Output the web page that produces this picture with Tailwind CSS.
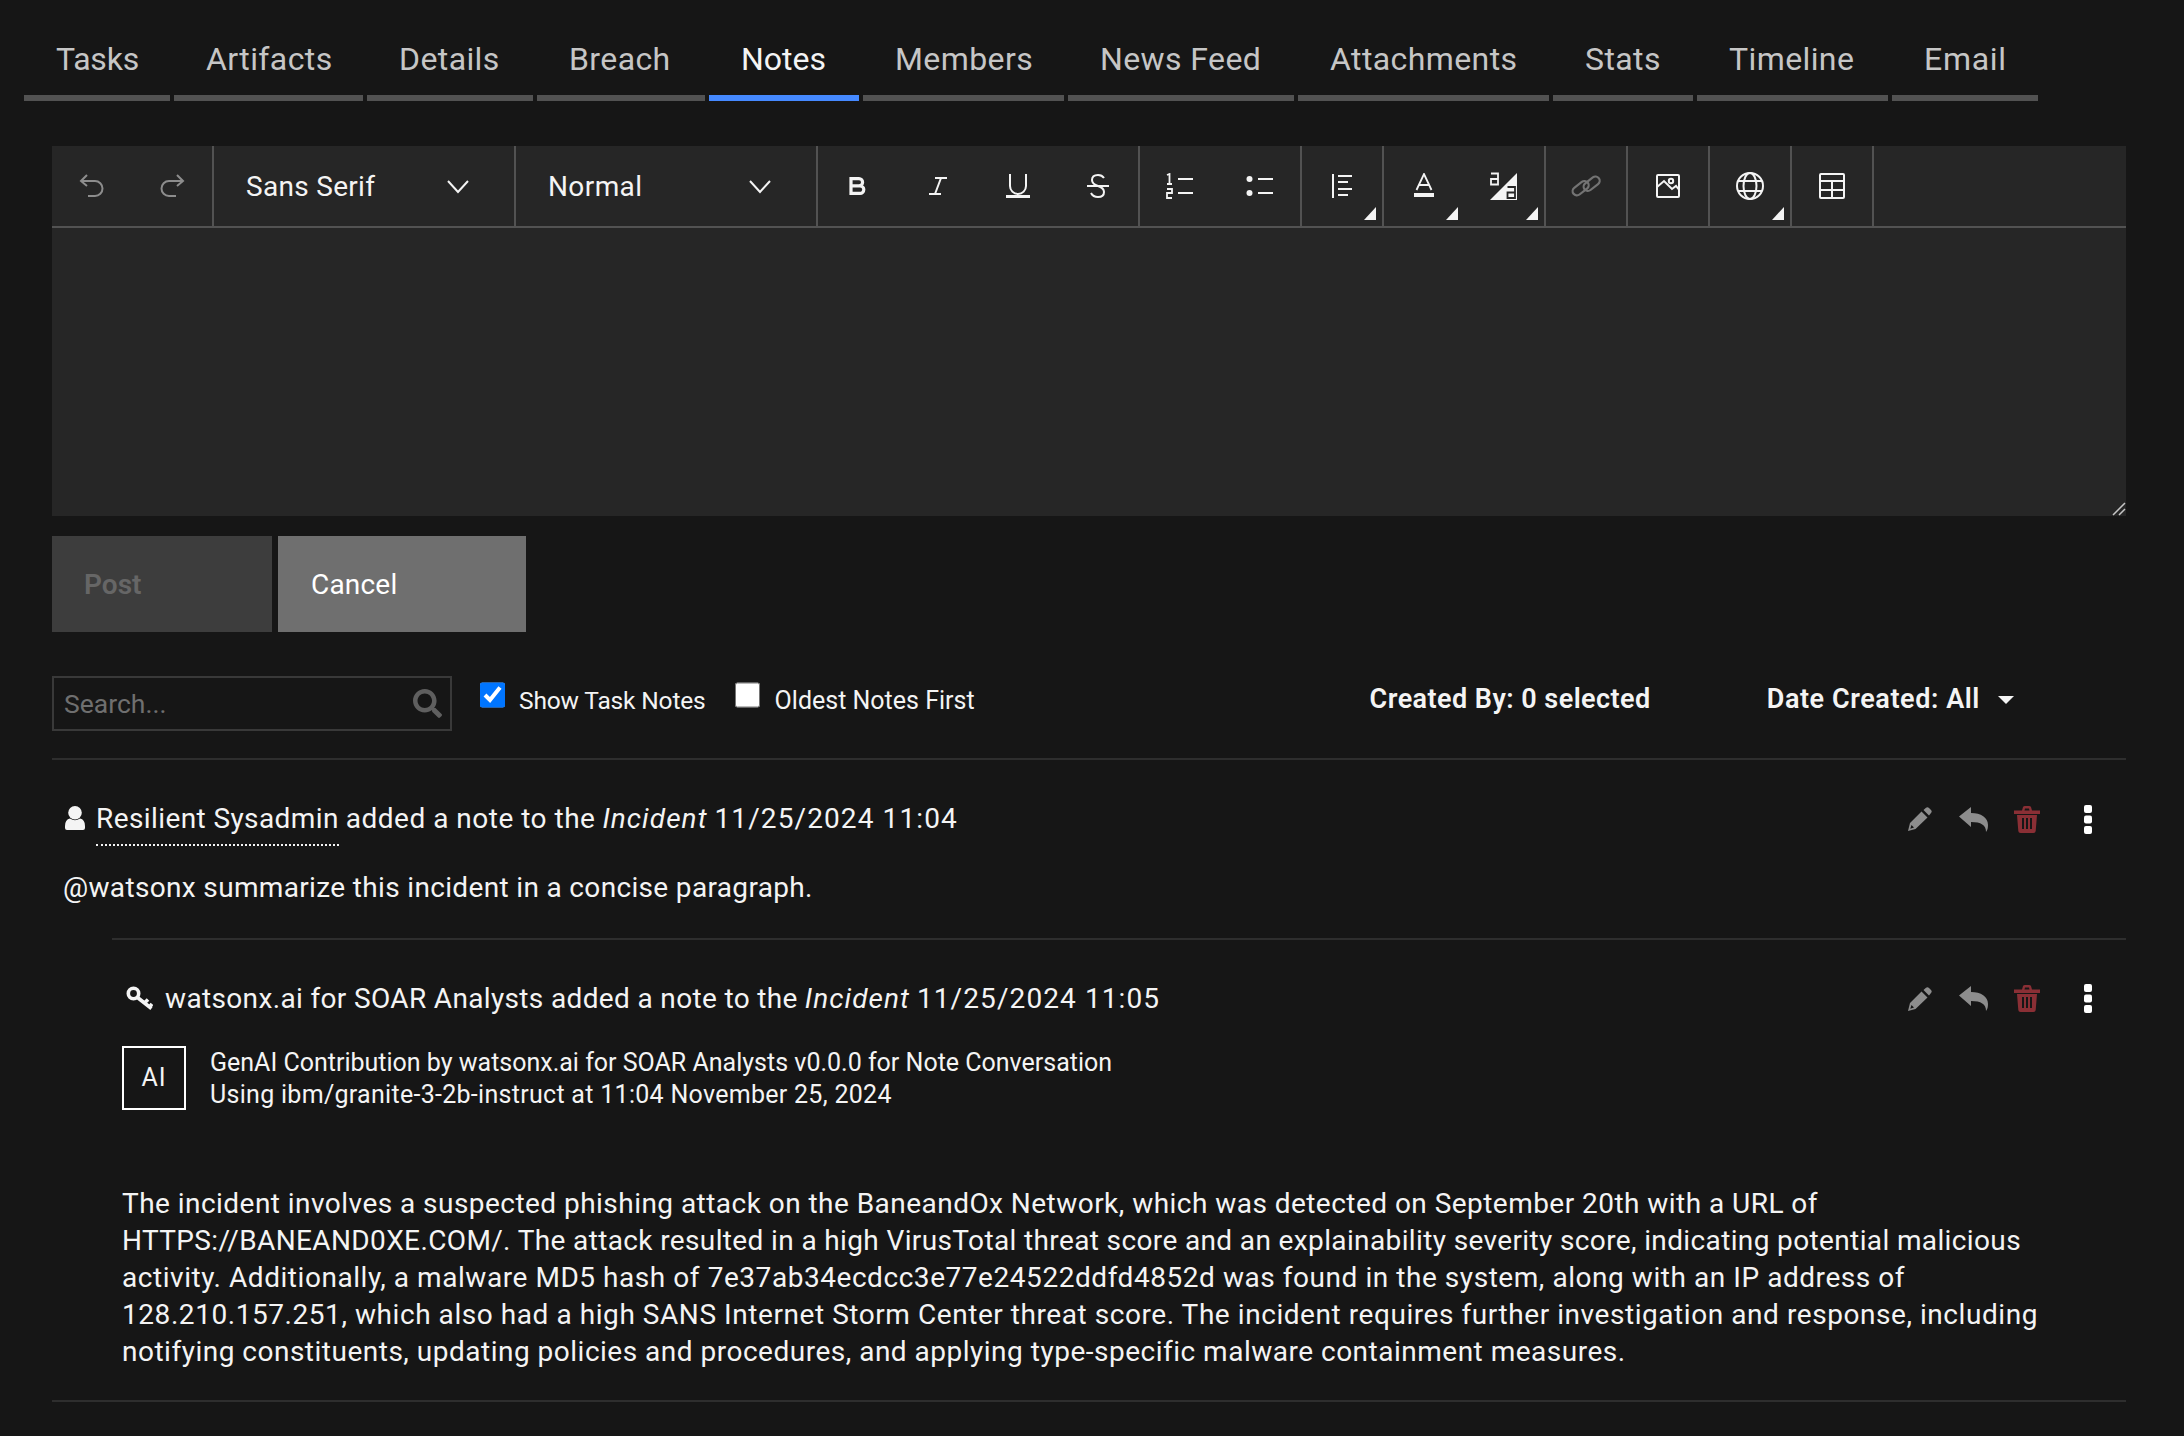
<!DOCTYPE html>
<html lang="en">
<head>
    <meta charset="UTF-8">
    <title>Notes</title>
    <script src="https://cdn.jsdelivr.net/npm/@tailwindcss/browser@4"></script>
</head>
<body class="bg-[#161616] text-[#f4f4f4] [font-family:Roboto,sans-serif]">
    <div class="w-[2184px] h-[1436px] overflow-hidden">
        <!-- Tabs -->
        <nav class="flex pl-[24px] gap-[4px] text-[32px] leading-[40px] tracking-[0.4px] text-[#c6c6c6]">
            <div class="w-[146px] pt-[39px] pb-[16px] pl-[32px] tracking-[-0.2px] border-b-[6px] border-[#525252]">Tasks</div>
            <div class="w-[189px] pt-[39px] pb-[16px] pl-[32px] border-b-[6px] border-[#525252]">Artifacts</div>
            <div class="w-[166px] pt-[39px] pb-[16px] pl-[32px] border-b-[6px] border-[#525252]">Details</div>
            <div class="w-[168px] pt-[39px] pb-[16px] pl-[32px] border-b-[6px] border-[#525252]">Breach</div>
            <div class="w-[150px] pt-[39px] pb-[16px] pl-[32px] tracking-normal border-b-[6px] border-[#4589ff] text-[#f4f4f4]">Notes</div>
            <div class="w-[201px] pt-[39px] pb-[16px] pl-[32px] border-b-[6px] border-[#525252]">Members</div>
            <div class="w-[226px] pt-[39px] pb-[16px] pl-[32px] border-b-[6px] border-[#525252]">News Feed</div>
            <div class="w-[251px] pt-[39px] pb-[16px] pl-[32px] border-b-[6px] border-[#525252]">Attachments</div>
            <div class="w-[140px] pt-[39px] pb-[16px] pl-[32px] border-b-[6px] border-[#525252]">Stats</div>
            <div class="w-[191px] pt-[39px] pb-[16px] pl-[32px] border-b-[6px] border-[#525252]">Timeline</div>
            <div class="w-[146px] pt-[39px] pb-[16px] pl-[32px] tracking-[0.7px] border-b-[6px] border-[#525252]">Email</div>
        </nav>

        <main class="ml-[52px] w-[2074px]">
            <!-- Editor -->
            <div class="mt-[45px] bg-[#262626]">
                <div class="flex h-[82px] border-b-2 border-[#525252]">
                    <div class="w-[162px] flex border-r-2 border-[#525252] text-[#8d8d8d]">
                        <div class="w-[80px] flex items-center justify-center">
                            <svg class="w-[28px] h-[28px]" viewBox="0 0 28 28" fill="none" stroke="currentColor" stroke-width="2"><path d="M9 3 L3 9 L9 14"/><path d="M4 9 H17 A7.5 7.5 0 0 1 17 24 H10"/></svg>
                        </div>
                        <div class="w-[80px] flex items-center justify-center">
                            <svg class="w-[28px] h-[28px]" viewBox="0 0 28 28" fill="none" stroke="currentColor" stroke-width="2"><path d="M19 3 L25 9 L19 14"/><path d="M24 9 H11 A7.5 7.5 0 0 0 11 24 H18"/></svg>
                        </div>
                    </div>
                    <div class="w-[302px] flex items-center justify-between pt-[2px] pl-[32px] pr-[45px] border-r-2 border-[#525252] text-[28px] tracking-[0.3px]">
                        <span>Sans Serif</span>
                        <svg class="w-[22px] h-[14px]" viewBox="0 0 22 14" fill="none" stroke="currentColor" stroke-width="2"><path d="M1 1 L11 12 L21 1"/></svg>
                    </div>
                    <div class="w-[302px] flex items-center justify-between pt-[2px] pl-[32px] pr-[45px] border-r-2 border-[#525252] text-[28px] tracking-[0.4px]">
                        <span>Normal</span>
                        <svg class="w-[22px] h-[14px]" viewBox="0 0 22 14" fill="none" stroke="currentColor" stroke-width="2"><path d="M1 1 L11 12 L21 1"/></svg>
                    </div>
                    <div class="w-[322px] flex border-r-2 border-[#525252]">
                        <div class="w-[80px] flex items-center justify-center">
                            <svg class="w-[18px] h-[18px]" viewBox="0 0 18 18" fill="none" stroke="currentColor" stroke-width="3.2"><path d="M2 1.6 H10 A3.6 3.6 0 0 1 10 8.8 H2 Z M2 8.8 H11 A3.8 3.8 0 0 1 11 16.4 H2 Z"/></svg>
                        </div>
                        <div class="w-[80px] flex items-center justify-center">
                            <svg class="w-[18px] h-[18px]" viewBox="0 0 18 18" fill="none" stroke="currentColor" stroke-width="2"><path d="M6 1 H18 M0 17 H12 M12 1 L6 17"/></svg>
                        </div>
                        <div class="w-[80px] flex items-center justify-center">
                            <svg class="w-[24px] h-[24px]" viewBox="0 0 24 24" fill="none" stroke="currentColor" stroke-width="2"><path d="M4 0 V12 A8 8 0 0 0 20 12 V0"/><path d="M0 22.5 H24" stroke-width="3"/></svg>
                        </div>
                        <div class="w-[80px] flex items-center justify-center">
                            <svg class="w-[24px] h-[26px]" viewBox="0 0 24 26" fill="none" stroke="currentColor" stroke-width="2"><path d="M1 13 H23"/><path d="M18 5 Q16 2 12 2 Q6 2 6 7 Q6 11 12 13 Q18 15 18 19 Q18 24 12 24 Q7 24 5 20"/></svg>
                        </div>
                    </div>
                    <div class="w-[162px] flex border-r-2 border-[#525252]">
                        <div class="w-[80px] flex items-center justify-center">
                            <svg class="w-[28px] h-[26px]" viewBox="0 0 28 26" fill="none" stroke="currentColor" stroke-width="2"><path d="M1 2 L3.5 1 V11 M1 11 H6 M1 16 H6 V20 H1 V25 H6" stroke-width="1.8"/><path d="M12 6 H27 M12 20 H27"/></svg>
                        </div>
                        <div class="w-[80px] flex items-center justify-center">
                            <svg class="w-[28px] h-[26px]" viewBox="0 0 28 26" fill="none" stroke="currentColor" stroke-width="2"><circle cx="3.5" cy="6" r="3" fill="currentColor" stroke="none"/><circle cx="3.5" cy="20" r="3" fill="currentColor" stroke="none"/><path d="M12 6 H27 M12 20 H27"/></svg>
                        </div>
                    </div>
                    <div class="w-[82px] relative flex items-center justify-center border-r-2 border-[#525252]">
                        <svg class="w-[20px] h-[26px]" viewBox="0 0 20 26" fill="none" stroke="currentColor" stroke-width="2"><path d="M1 1 V25"/><path d="M6 3 H20 M6 9 H16 M6 16 H20 M6 22 H16"/></svg>
                        <svg class="absolute right-[6px] bottom-[6px] w-[12px] h-[13px]" viewBox="0 0 12 13" fill="#f4f4f4"><path d="M12 0 V13 H0 Z"/></svg>
                    </div>
                    <div class="w-[162px] flex border-r-2 border-[#525252]">
                        <div class="w-[80px] relative flex items-center justify-center">
                            <svg class="w-[20px] h-[26px]" viewBox="0 0 20 26" fill="none" stroke="currentColor" stroke-width="1.8"><path d="M2.5 17 L10 1 L17.5 17 M5 12 H15"/><path d="M0 22 H20" stroke-width="4"/></svg>
                            <svg class="absolute right-[6px] bottom-[6px] w-[12px] h-[13px]" viewBox="0 0 12 13" fill="#f4f4f4"><path d="M12 0 V13 H0 Z"/></svg>
                        </div>
                        <div class="w-[80px] relative flex items-center justify-center">
                            <svg class="w-[30px] h-[28px]" viewBox="0 0 30 28" fill="none" stroke="currentColor" stroke-width="1.8"><path d="M1 28 L28 1 V28 Z" fill="currentColor" stroke="none"/><path d="M2 1.5 H9 V12.5 H2 V7 H9"/><path d="M18.5 15 H26 V26 H18.5 V20.5 H26" stroke="#262626"/></svg>
                            <svg class="absolute right-[6px] bottom-[6px] w-[12px] h-[13px]" viewBox="0 0 12 13" fill="#f4f4f4"><path d="M12 0 V13 H0 Z"/></svg>
                        </div>
                    </div>
                    <div class="w-[82px] flex items-center justify-center border-r-2 border-[#525252] text-[#737373]">
                        <svg class="w-[30px] h-[24px]" viewBox="0 0 30 24" fill="none" stroke="currentColor" stroke-width="2.2"><rect x="0.5" y="10" width="18" height="8.5" rx="4.2" transform="rotate(-38 9.5 14)"/><rect x="11.5" y="5.5" width="18" height="8.5" rx="4.2" transform="rotate(-38 20.5 9.5)"/></svg>
                    </div>
                    <div class="w-[82px] flex items-center justify-center border-r-2 border-[#525252]">
                        <svg class="w-[24px] h-[24px]" viewBox="0 0 24 24" fill="none" stroke="currentColor" stroke-width="2"><rect x="1" y="1" width="22" height="22" rx="1"/><circle cx="15" cy="7" r="2.2"/><path d="M1 13 L8 7 L16 15 L20 12 L24 17"/></svg>
                    </div>
                    <div class="w-[82px] relative flex items-center justify-center border-r-2 border-[#525252]">
                        <svg class="w-[28px] h-[28px]" viewBox="0 0 28 28" fill="none" stroke="currentColor" stroke-width="2"><circle cx="14" cy="14" r="13"/><ellipse cx="14" cy="14" rx="6.5" ry="13"/><path d="M2 9 H26 M2 19 H26"/></svg>
                        <svg class="absolute right-[6px] bottom-[6px] w-[12px] h-[13px]" viewBox="0 0 12 13" fill="#f4f4f4"><path d="M12 0 V13 H0 Z"/></svg>
                    </div>
                    <div class="w-[82px] flex items-center justify-center border-r-2 border-[#525252]">
                        <svg class="w-[26px] h-[26px]" viewBox="0 0 26 26" fill="none" stroke="currentColor" stroke-width="2"><rect x="1" y="1" width="24" height="24" rx="1"/><path d="M1 8 H25 M1 17 H25 M13 8 V25"/></svg>
                    </div>
                </div>
                <div class="relative h-[288px]">
                    <svg class="absolute right-0 bottom-0 w-[14px] h-[14px]" viewBox="0 0 14 14" fill="none" stroke="#c6c6c6" stroke-width="1.5"><path d="M1 13 L13 1 M7 13 L13 7"/></svg>
                </div>
            </div>

            <!-- Buttons -->
            <div class="flex gap-[6px] mt-[20px] text-[28px]">
                <button class="w-[220px] h-[96px] pt-[1px] pl-[32px] text-left bg-[#3d3d3d] text-[#666666] font-semibold">Post</button>
                <button class="w-[248px] h-[96px] pt-[1px] pl-[33px] text-left bg-[#6f6f6f] text-white tracking-[0.2px]">Cancel</button>
            </div>

            <!-- Filters -->
            <div class="flex mt-[44px] h-[55px]">
                <div class="w-[400px] h-[55px] flex items-center justify-between pl-[10px] pr-[8px] border-2 border-[#393939]">
                    <span class="text-[26.5px] text-[#6f6f6f]">Search...</span>
                    <svg class="w-[29px] h-[29px] text-[#5f5f5f]" viewBox="0 0 512 512" fill="currentColor"><path d="M505 442.7L405.3 343c-4.5-4.5-10.6-7-17-7H372c27.6-35.3 44-79.7 44-128C416 93.1 322.9 0 208 0S0 93.1 0 208s93.1 208 208 208c48.3 0 92.7-16.4 128-44v16.3c0 6.4 2.5 12.5 7 17l99.7 99.7c9.4 9.4 24.6 9.4 33.9 0l28.3-28.3c9.4-9.4 9.4-24.6.1-34zM208 336c-70.7 0-128-57.2-128-128 0-70.7 57.2-128 128-128 70.7 0 128 57.2 128 128 0 70.7-57.2 128-128 128z"/></svg>
                </div>
                <input type="checkbox" checked class="w-[25px] h-[26px] ml-[28px] mt-[6px] m-0">
                <span class="ml-[14px] mt-[8px] text-[24.5px] leading-[34px] tracking-[-0.15px]">Show Task Notes</span>
                <input type="checkbox" class="w-[25px] h-[26px] ml-[29px] mt-[6px] m-0">
                <span class="ml-[15px] mt-[8px] text-[25px] leading-[34px]">Oldest Notes First</span>
                <span class="ml-[395px] mt-[3px] text-[27px] leading-[40px] font-semibold tracking-[0.45px]">Created By: 0 selected</span>
                <span class="ml-[116px] mt-[3px] text-[27px] leading-[40px] font-semibold tracking-[0.57px]">Date Created: All</span>
                <svg class="ml-[18px] mt-[20px] w-[16px] h-[8px]" viewBox="0 0 16 8" fill="currentColor"><path d="M0 0 H16 L8 8 Z"/></svg>
            </div>
            <div class="mt-[27px] h-[2px] bg-[#2e2e2e]"></div>

            <!-- Note from sysadmin -->
            <div class="mt-[39px] h-[40px] flex items-center justify-between text-[28px] leading-[40px]">
                <div class="flex -mt-[1px] h-[40px] pl-[13px]">
                    <svg class="w-[20px] h-[24px] mt-[7px] mr-[11px]" viewBox="0 0 20 24" fill="currentColor"><circle cx="10" cy="6.8" r="6.8"/><path d="M0 20 Q0 13.5 5 12.5 Q10 16 15 12.5 Q20 13.5 20 20 V22 Q20 24 18 24 H2 Q0 24 0 22 Z"/></svg>
                    <div class="whitespace-nowrap"><span class="inline-block h-[47px] align-top border-b-2 border-dotted border-[#f4f4f4] tracking-[0.4px]">Resilient Sysadmin</span> <span class="tracking-[0.5px]">added a note to the</span> <em class="tracking-[1.05px]">Incident</em> <span class="tracking-[1.1px]">11/25/2024 11:04</span></div>
                </div>
                <div class="flex items-center pr-[34px]">
                    <svg class="w-[24px] h-[24px] text-[#8d8d8d]" viewBox="0 0 24 24" fill="currentColor"><path d="M15.5 3 L18 0.8 Q19.7 -0.4 21 1 L23 3 Q24.4 4.4 23 6 L21 8.5 Z"/><path fill-rule="evenodd" d="M13.5 4.5 L19.5 10.5 L7.5 22 L0 24 L2 16 Z M3.5 18 L2.3 21.7 L6 20.5 Z"/></svg>
                    <svg class="w-[29px] h-[25px] ml-[27px] text-[#8d8d8d]" viewBox="0 0 29 25" fill="currentColor"><path d="M0 9.5 L12 0 V6 C22 6 29 10.5 29 18 C29 21 28.5 23 27 25 C27 18 22 15 12 15 V20 Z"/></svg>
                    <svg class="w-[26px] h-[27px] ml-[26px] text-[#8a2f35]" viewBox="0 0 26 27" fill="currentColor"><path d="M0 4.5 H26 V8 H0 Z M8 4.5 L9 1 Q9.5 0 11 0 H15 Q16.5 0 17 1 L18 4.5 H15.5 L15 2.5 H11 L10.5 4.5 Z"/><path fill-rule="evenodd" d="M3 9 H23 L21.7 25 Q21.5 27 19.5 27 H6.5 Q4.5 27 4.3 25 Z M8 12 V23 H10 V12 Z M12 12 V23 H14 V12 Z M16 12 V23 H18 V12 Z"/></svg>
                    <svg class="w-[8px] h-[29px] ml-[44px] text-white" viewBox="0 0 8 29" fill="currentColor"><rect x="0" y="0" width="8" height="8" rx="2"/><rect x="0" y="10.5" width="8" height="8" rx="2"/><rect x="0" y="21" width="8" height="8" rx="2"/></svg>
                </div>
            </div>
            <p class="mt-[29px] pl-[11px] text-[28px] leading-[40px] tracking-[0.34px]">@watsonx summarize this incident in a concise paragraph.</p>

            <!-- Reply from watsonx -->
            <div class="ml-[60px] mt-[30px] h-[2px] bg-[#2e2e2e]"></div>
            <div class="mt-[39px] h-[40px] flex items-center justify-between text-[28px] leading-[40px]">
                <div class="flex h-[40px] pl-[74px]">
                    <svg class="w-[27px] h-[24px] mt-[7px] mr-[12px]" viewBox="0 0 27 24" fill="none" stroke="currentColor" stroke-width="3.6"><circle cx="7.5" cy="7.5" r="5.2"/><path d="M11.5 11.5 L25.5 22.5 M18.5 17 L22 13.5 M23.5 21 L26 18"/></svg>
                    <div class="whitespace-nowrap"><span class="tracking-[0.35px]">watsonx.ai for SOAR Analysts added a note to the</span> <em class="tracking-[1.05px]">Incident</em> <span class="tracking-[1.1px]">11/25/2024 11:05</span></div>
                </div>
                <div class="flex items-center -mt-[1px] pr-[34px]">
                    <svg class="w-[24px] h-[24px] text-[#8d8d8d]" viewBox="0 0 24 24" fill="currentColor"><path d="M15.5 3 L18 0.8 Q19.7 -0.4 21 1 L23 3 Q24.4 4.4 23 6 L21 8.5 Z"/><path fill-rule="evenodd" d="M13.5 4.5 L19.5 10.5 L7.5 22 L0 24 L2 16 Z M3.5 18 L2.3 21.7 L6 20.5 Z"/></svg>
                    <svg class="w-[29px] h-[25px] ml-[27px] text-[#8d8d8d]" viewBox="0 0 29 25" fill="currentColor"><path d="M0 9.5 L12 0 V6 C22 6 29 10.5 29 18 C29 21 28.5 23 27 25 C27 18 22 15 12 15 V20 Z"/></svg>
                    <svg class="w-[26px] h-[27px] ml-[26px] text-[#8a2f35]" viewBox="0 0 26 27" fill="currentColor"><path d="M0 4.5 H26 V8 H0 Z M8 4.5 L9 1 Q9.5 0 11 0 H15 Q16.5 0 17 1 L18 4.5 H15.5 L15 2.5 H11 L10.5 4.5 Z"/><path fill-rule="evenodd" d="M3 9 H23 L21.7 25 Q21.5 27 19.5 27 H6.5 Q4.5 27 4.3 25 Z M8 12 V23 H10 V12 Z M12 12 V23 H14 V12 Z M16 12 V23 H18 V12 Z"/></svg>
                    <svg class="w-[8px] h-[29px] ml-[44px] text-white" viewBox="0 0 8 29" fill="currentColor"><rect x="0" y="0" width="8" height="8" rx="2"/><rect x="0" y="10.5" width="8" height="8" rx="2"/><rect x="0" y="21" width="8" height="8" rx="2"/></svg>
                </div>
            </div>
            <div class="flex mt-[27px] ml-[70px]">
                <div class="w-[64px] h-[64px] flex items-center justify-center border-2 border-white text-[25px] tracking-[1px]">AI</div>
                <div class="ml-[24px] pt-[1px] text-[25px] leading-[32px]">
                    <div>GenAI Contribution by watsonx.ai for SOAR Analysts v0.0.0 for Note Conversation</div>
                    <div class="tracking-[0.29px]">Using ibm/granite-3-2b-instruct at 11:04 November 25, 2024</div>
                </div>
            </div>
            <div class="mt-[74px] ml-[70px] text-[28px] leading-[37px] whitespace-nowrap">
                <div class="tracking-[0.46px]">The incident involves a suspected phishing attack on the BaneandOx Network, which was detected on September 20th with a URL of</div>
                <div class="tracking-[0.37px]">HTTPS://BANEAND0XE.COM/. The attack resulted in a high VirusTotal threat score and an explainability severity score, indicating potential malicious</div>
                <div class="tracking-[0.55px]">activity. Additionally, a malware MD5 hash of 7e37ab34ecdcc3e77e24522ddfd4852d was found in the system, along with an IP address of</div>
                <div class="tracking-[0.56px]">128.210.157.251, which also had a high SANS Internet Storm Center threat score. The incident requires further investigation and response, including</div>
                <div class="tracking-[0.5px]">notifying constituents, updating policies and procedures, and applying type-specific malware containment measures.</div>
            </div>
            <div class="mt-[30px] h-[2px] bg-[#2e2e2e]"></div>
        </main>
    </div>
</body>
</html>
